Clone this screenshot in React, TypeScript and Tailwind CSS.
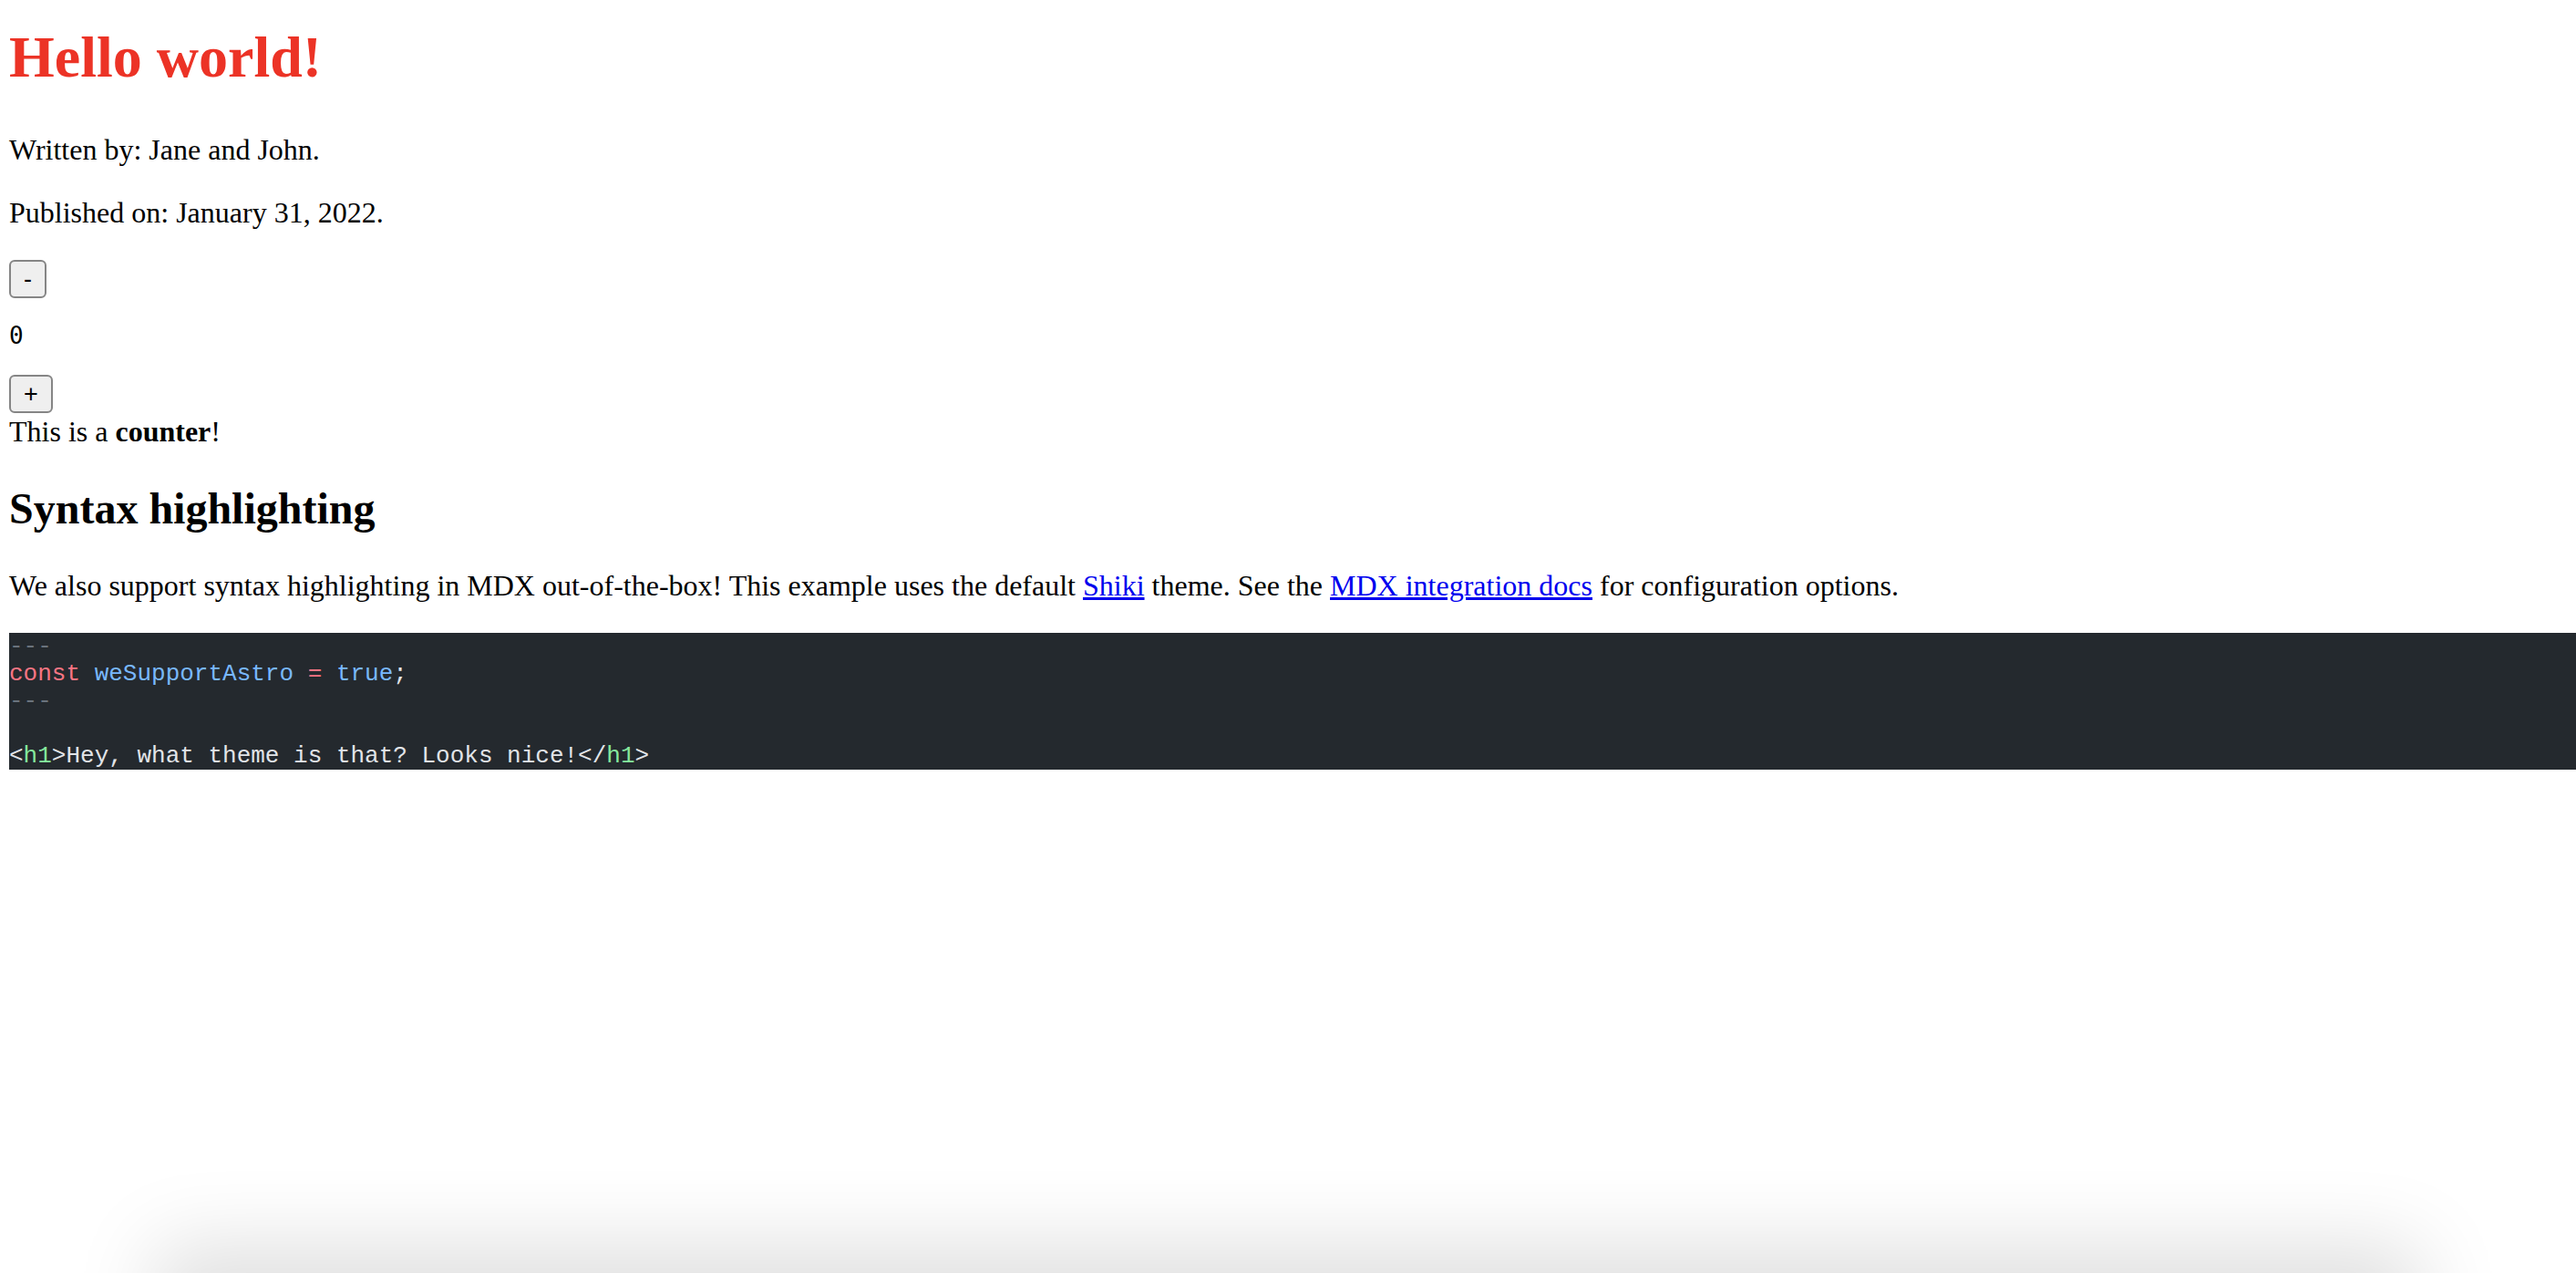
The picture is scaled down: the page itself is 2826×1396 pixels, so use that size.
import React, { useState } from "react";

const serif = "font-['Liberation_Serif','Times_New_Roman',serif]";
const mono = "font-['DejaVu_Sans_Mono','Liberation_Mono',monospace]";

const CodeLine: React.FC<{ children?: React.ReactNode }> = ({ children }) => (
  <span className="block h-[30px] whitespace-pre">{children ?? " "}</span>
);

const App: React.FC = () => {
  const [count, setCount] = useState(0);

  return (
    <div className={`min-h-screen bg-white text-black ${serif}`}>
      <div className="pl-[10px]">
        <h1 className="mt-[26px] mb-[46px] text-[64px] leading-[74px] font-bold text-[#ec3326]">
          Hello world!
        </h1>
        <p className="text-[32px] leading-[37px] mb-[32px]">Written by: Jane and John.</p>
        <p className="text-[32px] leading-[37px] mb-[32px]">Published on: January 31, 2022.</p>

        <div>
          <div className="pt-[1px] h-[43px]">
            <button
              type="button"
              onClick={() => setCount((c) => c - 1)}
              className="block w-[41px] h-[42px] rounded-[6px] border-2 border-[#858585] bg-[#efefef] text-[27px] leading-none text-black font-['Liberation_Sans',Arial,sans-serif]"
            >
              -
            </button>
          </div>
          <pre className={`my-[26px] text-[26px] leading-[30px] ${mono}`}>{count}</pre>
          <div className="pt-[2px] h-[46px]">
            <button
              type="button"
              onClick={() => setCount((c) => c + 1)}
              className="block w-[48px] h-[42px] rounded-[6px] border-2 border-[#858585] bg-[#efefef] text-[27px] leading-none text-black font-['Liberation_Sans',Arial,sans-serif]"
            >
              +
            </button>
          </div>
        </div>
        <div className="text-[32px] leading-[37px]">
          This is a <strong className="font-bold">counter</strong>!
        </div>

        <h2 className="mt-[38px] mb-[39px] text-[48px] leading-[55px] font-bold">Syntax highlighting</h2>
        <p className="text-[32px] leading-[37px] mb-[33px]">
          We also support syntax highlighting in MDX out-of-the-box! This example uses the default{" "}
          <a href="#" className="text-[#0000ee] underline">Shiki</a> theme. See the{" "}
          <a href="#" className="text-[#0000ee] underline">MDX integration docs</a> for configuration options.
        </p>

        <pre className={`bg-[#24292e] text-[#e1e4e8] text-[26px] leading-[30px] overflow-x-auto ${mono}`}>
          <code className="block">
            <CodeLine><span className="text-[#6a737d]">---</span></CodeLine>
            <CodeLine>
              <span className="text-[#f97583]">const</span>{" "}
              <span className="text-[#79b8ff]">weSupportAstro</span>{" "}
              <span className="text-[#f97583]">=</span>{" "}
              <span className="text-[#79b8ff]">true</span>
              <span className="text-[#e1e4e8]">;</span>
            </CodeLine>
            <CodeLine><span className="text-[#6a737d]">---</span></CodeLine>
            <CodeLine />
            <CodeLine>
              <span>&lt;</span>
              <span className="text-[#85e89d]">h1</span>
              <span>&gt;Hey, what theme is that? Looks nice!&lt;/</span>
              <span className="text-[#85e89d]">h1</span>
              <span>&gt;</span>
            </CodeLine>
          </code>
        </pre>
      </div>

      {/* soft shadow along the bottom edge of the window */}
      <div className="pointer-events-none fixed left-[200px] right-[200px] bottom-[-60px] h-[60px] shadow-[0_0_90px_30px_rgba(0,0,0,0.13)]" />
    </div>
  );
};

export default App;
